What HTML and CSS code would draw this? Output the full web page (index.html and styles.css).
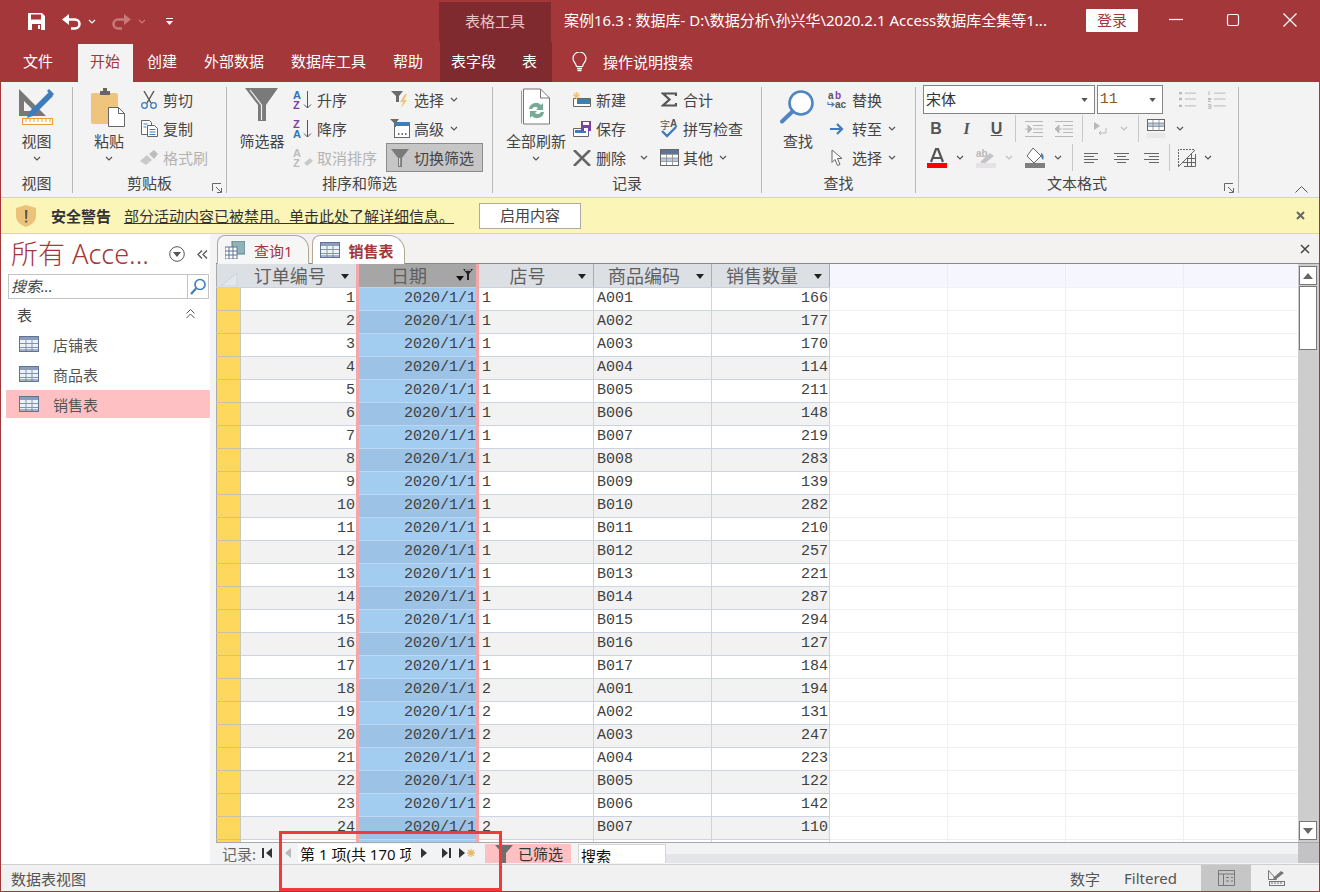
FILE: index.html
```html
<!DOCTYPE html>
<html lang="zh-CN">
<head>
    <meta charset="UTF-8">
    <title>Access 数据表视图</title>
    <link rel="stylesheet" href="styles.css">
</head>
<body>

    <!-- 重复使用的图标 -->
    <svg class="sprite" width="0" height="0">
        <symbol id="chev" viewBox="0 0 8 5"><path d="M1 1l3 3 3-3" fill="none" stroke="currentColor" stroke-width="1.2"/></symbol>
        <symbol id="tbl" viewBox="0 0 20 16">
            <rect x=".5" y=".5" width="19" height="15" fill="#eef1f6" stroke="#5f7397"/>
            <rect x="1" y="1" width="18" height="3" fill="#8c9dbc"/>
            <path d="M1 7.5h18M1 11.5h18M7 4v11M13 4v11" stroke="#8294b4" fill="none"/>
            <rect x="1" y="13" width="18" height="2" fill="#5f7397" opacity=".5"/>
        </symbol>
        <symbol id="drop" viewBox="0 0 8 5"><path d="M0 0h8L4 5z" fill="currentColor"/></symbol>
        <symbol id="funnel" viewBox="0 0 18 18"><path d="M0 0h18l-7 9v9H7V9z" fill="#7a7a7a"/><path d="M8.6 9v8" stroke="#d8d8d8" stroke-width="1.2"/></symbol>
    </svg>

    <div class="window">

        <!-- 标题栏 -->
        <div class="titlebar">
            <div class="qat">
                <svg class="q-save" width="17" height="17" viewBox="0 0 17 17"><path d="M0 0h14l3 3v14H0z" fill="#fff"/><path d="M3 1.500h10v5H3zM4 11h9v6H4z" fill="#a4373a"/><path d="M10 12h2v4h-2z" fill="#fff"/></svg>
                <svg class="q-undo" width="19" height="16" viewBox="0 0 19 16"><path d="M3 5.500h10a4.500 4.500 0 0 1 0 9H9" fill="none" stroke="#fff" stroke-width="2.600"/><path d="M7 0v11L0 5.500z" fill="#fff"/></svg>
                <svg class="q-chev" width="8" height="5"><use href="#chev"/></svg>
                <svg class="q-redo" width="19" height="16" viewBox="0 0 19 16"><path d="M16 5.500H6a4.500 4.500 0 0 0 0 9h4" fill="none" stroke="#c9787a" stroke-width="2.600"/><path d="M12 0v11l7-5.500z" fill="#c9787a"/></svg>
                <svg class="q-chev dim" width="8" height="5"><use href="#chev"/></svg>
                <svg class="q-more" width="7" height="7" viewBox="0 0 7 7"><path d="M0 0h7v1H0zM0 3h7L3.500 7z" fill="#fff"/></svg>
            </div>
            <div class="ctx-label">表格工具</div>
            <div class="doc-title">案例16.3 : 数据库- D:\数据分析\孙兴华\2020.2.1 Access数据库全集等1...</div>
            <div class="login">登录</div>
            <div class="win-btns">
                <div class="win-btn"><svg width="14" height="14" viewBox="0 0 14 14"><path d="M0 6.500h14" stroke="#fff" stroke-width="1.200"/></svg></div>
                <div class="win-btn"><svg width="14" height="14" viewBox="0 0 14 14"><rect x="1.500" y="1.500" width="11" height="11" rx="1.500" fill="none" stroke="#fff" stroke-width="1.200"/></svg></div>
                <div class="win-btn"><svg width="14" height="14" viewBox="0 0 14 14"><path d="M.5.500l13 13M13.500.500l-13 13" stroke="#fff" stroke-width="1.200"/></svg></div>
            </div>
        </div>

        <!-- 选项卡 -->
        <div class="tabbar">
            <div class="tab tab-file">文件</div>
            <div class="tab tab-on">开始</div>
            <div class="tab">创建</div>
            <div class="tab">外部数据</div>
            <div class="tab">数据库工具</div>
            <div class="tab">帮助</div>
            <div class="ctx-tabs">
                <div class="tab">表字段</div>
                <div class="tab">表</div>
            </div>
            <svg class="bulb" width="15" height="20" viewBox="0 0 15 20"><path d="M4.500 14.500C4 11 1 10 1 6.500a6.500 6.500 0 0 1 13 0c0 3.500-3 4.500-3.500 8z" fill="none" stroke="#fff" stroke-width="1.200"/><path d="M5 16.500h5M5.500 18.500h4" stroke="#fff" stroke-width="1.300"/></svg>
            <div class="tell">操作说明搜索</div>
        </div>

        <!-- 功能区 -->
        <div class="ribbon">

            <div class="group g-view">
                <div class="g-body">
                    <div class="big big-view">
                        <div class="big-ico"><svg width="36" height="38" viewBox="0 0 36 38">
                            <path d="M0 1v27h27zM5 13l10 10H5z" fill="#787878" fill-rule="evenodd"/>
                            <path d="M10 24L30 4l4 4-20 20-6 2z" fill="#3f7cbc"/><path d="M30 1l5 5-2 2-5-5z" fill="#3f7cbc"/>
                            <rect x="3.500" y="30.500" width="30" height="6" fill="#fff" stroke="#ed9b40"/>
                            <path d="M7 31v3M11 31v3M15 31v3M19 31v3M23 31v3M27 31v3M31 31v3" stroke="#ed9b40"/>
                        </svg></div>
                        <div class="big-txt">视图</div>
                        <svg class="chev" width="8" height="5"><use href="#chev"/></svg>
                    </div>
                </div>
                <div class="g-label">视图</div>
            </div>

            <div class="group g-clip">
                <div class="g-body">
                    <div class="big big-paste">
                        <div class="big-ico"><svg width="36" height="40" viewBox="0 0 36 40">
                            <rect x="0" y="5" width="27" height="31" rx="2" fill="#efc47d"/>
                            <path d="M9 7V3h3V0h4v3h3v4z" fill="#666"/>
                            <path d="M17.500 19.500h10l6 6v13h-16z" fill="#fff" stroke="#666"/><path d="M27.500 19.500v6h6" fill="none" stroke="#666"/>
                        </svg></div>
                        <div class="big-txt">粘贴</div>
                        <svg class="chev" width="8" height="5"><use href="#chev"/></svg>
                    </div>
                    <div class="col col-clip">
                        <div class="sm"><span class="sm-ico"><svg width="16" height="18" viewBox="0 0 16 18"><path d="M3 0l7 12M13 0L6 12" stroke="#555" stroke-width="1.400"/><circle cx="3.500" cy="14.500" r="2.800" fill="none" stroke="#3f7cbc" stroke-width="1.300"/><circle cx="12.500" cy="14.500" r="2.800" fill="none" stroke="#3f7cbc" stroke-width="1.300"/></svg></span>剪切</div>
                        <div class="sm"><span class="sm-ico"><svg width="17" height="17" viewBox="0 0 17 17"><path d="M.5.500h8l2 2v12H.5z" fill="#fff" stroke="#666"/><path d="M6.500 5.500h7l3 3v8h-10z" fill="#fff" stroke="#666"/><path d="M2.500 4h4M2.500 7h3M8.500 9.500h6M8.500 12h6M8.500 14.500h6" stroke="#3f7cbc"/></svg></span>复制</div>
                        <div class="sm off"><span class="sm-ico"><svg width="18" height="15" viewBox="0 0 18 15"><path d="M0 11l7-6 5 5-6 5z" fill="#c9c9c9"/><path d="M9 4l5-4 4 4-4 5z" fill="#bdbdbd"/></svg></span>格式刷</div>
                    </div>
                </div>
                <div class="g-label">剪贴板</div>
                <svg class="launcher" width="10" height="10" viewBox="0 0 10 10"><path d="M.5 8V.5H9M4 4l5 5M5 9.500h4.500V5" fill="none" stroke="#666"/></svg>
            </div>

            <div class="group g-sort">
                <div class="g-body">
                    <div class="big big-filter">
                        <div class="big-ico"><svg width="34" height="34" viewBox="0 0 34 34"><path d="M0 0h33L21 17v16h-8V17z" fill="#7a7a7a"/><path d="M5 2l11.500 15v15" fill="none" stroke="#f1f1f1" stroke-width="1.200"/></svg></div>
                        <div class="big-txt">筛选器</div>
                    </div>
                    <div class="col col-sort">
                        <div class="sm"><span class="sm-ico"><svg width="20" height="20" viewBox="0 0 20 20"><text class="ico-t" x="0" y="9" fill="#2e75b6">A</text><text class="ico-t" x="0" y="19" fill="#7b3fa8">Z</text><path d="M14.500 1v17M11 14.500l3.500 3.500 3.500-3.500" fill="none" stroke="#555"/></svg></span>升序</div>
                        <div class="sm"><span class="sm-ico"><svg width="20" height="20" viewBox="0 0 20 20"><text class="ico-t" x="0" y="9" fill="#7b3fa8">Z</text><text class="ico-t" x="0" y="19" fill="#2e75b6">A</text><path d="M14.500 1v17M11 14.500l3.500 3.500 3.500-3.500" fill="none" stroke="#555"/></svg></span>降序</div>
                        <div class="sm off"><span class="sm-ico"><svg width="20" height="20" viewBox="0 0 20 20"><text class="ico-t" x="0" y="9" fill="#bcbcbc">A</text><text class="ico-t" x="0" y="19" fill="#bcbcbc">Z</text><path d="M11 15l6-5 3 3-6 5z" fill="#c9c9c9"/></svg></span>取消排序</div>
                    </div>
                    <div class="col col-sel">
                        <div class="sm"><span class="sm-ico"><svg width="18" height="18" viewBox="0 0 18 18"><path d="M0 0h12L8 5v6H5V5z" fill="#6b6b6b"/><path d="M14 3l-5 8h3l-2 6 6-8h-3l3-6z" fill="#efc47d"/></svg></span>选择<svg class="chev-r" width="8" height="5"><use href="#chev"/></svg></div>
                        <div class="sm"><span class="sm-ico"><svg width="20" height="19" viewBox="0 0 20 19"><rect x="4.500" y="3.500" width="15" height="15" fill="#fff" stroke="#666"/><rect x="5" y="3" width="15" height="4" fill="#3f7cbc"/><path d="M0 0h9L6 4v4H4V4z" fill="#6b6b6b"/><path d="M8 15h1.500M11.500 15H13M15 15h1.500" stroke="#444" stroke-width="1.500"/></svg></span>高级<svg class="chev-r" width="8" height="5"><use href="#chev"/></svg></div>
                        <div class="sm toggle"><span class="sm-ico"><svg width="18" height="18"><use href="#funnel"/></svg></span>切换筛选</div>
                    </div>
                </div>
                <div class="g-label">排序和筛选</div>
            </div>

            <div class="group g-rec">
                <div class="g-body">
                    <div class="big big-refresh">
                        <div class="big-ico"><svg width="30" height="37" viewBox="0 0 30 37">
                            <path d="M.5 2.500v33" stroke="#999"/>
                            <path d="M2.500 1h17l9 9v26h-26z" fill="#fff" stroke="#777"/><path d="M19.500 1v9h9" fill="none" stroke="#777"/>
                            <path d="M8 21a7 7 0 0 1 12-4l2-2v7h-7l2-2a4 4 0 0 0-6 1z" fill="#78ab97"/>
                            <path d="M23 24a7 7 0 0 1-12 4l-2 2v-7h7l-2 2a4 4 0 0 0 6-1z" fill="#78ab97"/>
                        </svg></div>
                        <div class="big-txt">全部刷新</div>
                        <svg class="chev" width="8" height="5"><use href="#chev"/></svg>
                    </div>
                    <div class="col col-rec">
                        <div class="sm"><span class="sm-ico"><svg width="18" height="15" viewBox="0 0 18 15"><path d="M.5 6.500h17v8H.5z" fill="#fff" stroke="#666"/><rect x="4" y="7" width="13" height="5" fill="#3f7cbc"/><path d="M3.500 0v7M0 3.500h7M1 1l5 5M6 1L1 6" stroke="#efc47d" stroke-width="1.100"/></svg></span>新建</div>
                        <div class="sm"><span class="sm-ico"><svg width="18" height="16" viewBox="0 0 18 16"><path d="M.5 7.500h15v8H.5z" fill="#fff" stroke="#666"/><rect x="2" y="9" width="11" height="3" fill="#3f7cbc"/><rect x="8" y="0" width="10" height="10" fill="#7b3fa8"/><rect x="10" y="1" width="6" height="3" fill="#fff"/><rect x="11" y="7" width="4" height="3" fill="#fff"/></svg></span>保存</div>
                        <div class="sm"><span class="sm-ico"><svg width="18" height="16" viewBox="0 0 18 16"><path d="M1 0l16 16M17 0L1 16" stroke="#666" stroke-width="2.600"/></svg></span>删除<svg class="chev-r chev-del" width="8" height="5"><use href="#chev"/></svg></div>
                    </div>
                    <div class="col">
                        <div class="sm"><span class="sm-ico"><svg width="16" height="15" viewBox="0 0 16 15"><path d="M15 4V1.500H2L8.500 7.500 2 13.500h13V11" fill="none" stroke="#555" stroke-width="2.200"/></svg></span>合计</div>
                        <div class="sm"><span class="sm-ico"><svg width="18" height="20" viewBox="0 0 18 20"><text class="ico-cn" x="0" y="10" fill="#555">字</text><text class="ico-t2" x="10" y="8" fill="#555">A</text><path d="M2 12l5 5 9-9" fill="none" stroke="#3f7cbc" stroke-width="2.400"/></svg></span>拼写检查</div>
                        <div class="sm"><span class="sm-ico"><svg width="19" height="17" viewBox="0 0 19 17"><rect x=".5" y=".5" width="18" height="16" fill="#fff" stroke="#666"/><rect x="1" y="1" width="17" height="4" fill="#5f7397"/><rect x="1" y="9" width="17" height="3" fill="#b5cbe3"/><path d="M1 5.500h17M1 9h17M1 12.500h17M6.500 5v11M12.500 5v11" stroke="#8a8a8a" stroke-width=".8"/></svg></span>其他<svg class="chev-r" width="8" height="5"><use href="#chev"/></svg></div>
                    </div>
                </div>
                <div class="g-label">记录</div>
            </div>

            <div class="group g-find">
                <div class="g-body">
                    <div class="big big-find">
                        <div class="big-ico"><svg width="36" height="36" viewBox="0 0 36 36"><circle cx="21" cy="15" r="11.500" fill="#fff" stroke="#4f86bf" stroke-width="2.600"/><path d="M12.500 23.500L2 33.500" stroke="#4f86bf" stroke-width="4" stroke-linecap="round"/></svg></div>
                        <div class="big-txt">查找</div>
                    </div>
                    <div class="col col-find">
                        <div class="sm"><span class="sm-ico"><svg width="21" height="18" viewBox="0 0 21 18"><text class="ico-t2" x="1" y="8" fill="#555">a</text><text class="ico-t2" x="8" y="8" fill="#7b3fa8">b</text><text class="ico-t2" x="8" y="17" fill="#555">ac</text><path d="M1 11v2.500h6M4.500 11.500l2.500 2-2.500 2" fill="none" stroke="#3f7cbc" stroke-width="1.100"/></svg></span>替换</div>
                        <div class="sm"><span class="sm-ico"><svg width="14" height="12" viewBox="0 0 14 12"><path d="M0 6h11M7 1l5 5-5 5" fill="none" stroke="#3f7cbc" stroke-width="2.200"/></svg></span>转至<svg class="chev-r" width="8" height="5"><use href="#chev"/></svg></div>
                        <div class="sm"><span class="sm-ico"><svg width="12" height="18" viewBox="0 0 12 18"><path d="M1 1v12.500l3-3 2.500 6 2.500-1-2.500-6H11z" fill="#fff" stroke="#666"/></svg></span>选择<svg class="chev-r" width="8" height="5"><use href="#chev"/></svg></div>
                    </div>
                </div>
                <div class="g-label">查找</div>
            </div>

            <div class="group g-text">
                <div class="fmt">
                    <div class="fmt-row1">
                        <div class="combo combo-font">宋体<svg class="combo-arrow" width="7" height="4"><use href="#drop"/></svg></div>
                        <div class="combo combo-size">11<svg class="combo-arrow" width="7" height="4"><use href="#drop"/></svg></div>
                        <svg class="list-ico" width="18" height="18" viewBox="0 0 18 18"><path d="M0 2h3M0 8h3M0 15h3" stroke="#b8b8b8" stroke-width="2.500"/><path d="M6 2h12M6 8h12M6 15h12" stroke="#b8b8b8"/></svg>
                        <svg class="list-ico" width="18" height="18" viewBox="0 0 18 18"><path d="M1 0v4M0 7.500h3v1H0v2h3M0 13.500h3v4H0M0 15.500h3" stroke="#b8b8b8" fill="none"/><path d="M6 2h12M6 8h12M6 15h12" stroke="#b8b8b8"/></svg>
                    </div>
                    <div class="fmt-row fmt-row2">
                        <div class="cell b-cell">B</div>
                        <div class="cell i-cell">I</div>
                        <div class="cell u-cell">U</div>
                        <div class="cell"><span class="vsep"></span></div>
                        <div class="cell"><svg width="18" height="16" viewBox="0 0 18 16"><path d="M0 .5h18M8 4.500h10M8 8h10M8 11.500h10M0 15.500h18" stroke="#b8b8b8"/><path d="M0 8h4M3 4l4 4-4 4z" fill="#b8b8b8" stroke="#b8b8b8"/></svg></div>
                        <div class="cell"><svg width="18" height="16" viewBox="0 0 18 16"><path d="M0 .5h18M8 4.500h10M8 8h10M8 11.500h10M0 15.500h18" stroke="#b8b8b8"/><path d="M3 8h4M4 4L0 8l4 4z" fill="#b8b8b8" stroke="#b8b8b8"/></svg></div>
                        <div class="cell"><span class="vsep"></span></div>
                        <div class="cell"><svg width="14" height="14" viewBox="0 0 14 14"><path d="M0 0l6 4-6 4z" fill="#b8b8b8"/><path d="M12 6v5H5M7 9l-2 2 2 2" fill="none" stroke="#b8b8b8"/></svg></div>
                        <div class="cell"><svg class="off-c" width="8" height="5"><use href="#chev"/></svg></div>
                        <div class="cell"><span class="vsep"></span></div>
                        <div class="cell"><svg width="20" height="19" viewBox="0 0 20 19"><rect x=".5" y=".5" width="17" height="11" fill="#fff" stroke="#666"/><rect x="1" y="4" width="16" height="3" fill="#b5cbe3"/><path d="M6 1v11M12 1v11M1 4h16M1 7.500h16" stroke="#888" stroke-width=".8"/><rect y="14" width="18" height="5" fill="#e8e8e8"/></svg></div>
                        <div class="cell"><svg class="on-c" width="8" height="5"><use href="#chev"/></svg></div>
                    </div>
                    <div class="fmt-row fmt-row3">
                        <div class="cell"><svg width="20" height="20" viewBox="0 0 20 20"><path d="M4 14l5-13h2l5 13M6 10h8" fill="none" stroke="#555" stroke-width="2.200"/><rect y="15" width="20" height="5" fill="#f00"/></svg></div>
                        <div class="cell"><svg class="on-c" width="8" height="5"><use href="#chev"/></svg></div>
                        <div class="cell"><svg width="20" height="20" viewBox="0 0 20 20"><text class="ico-t2" x="0" y="9" fill="#b8b8b8">ab</text><path d="M4 14l10-9 4 3-10 8z" fill="#c4c4c4"/><rect y="15" width="20" height="5" fill="#e6e1e6"/></svg></div>
                        <div class="cell"><svg class="off-c" width="8" height="5"><use href="#chev"/></svg></div>
                        <div class="cell"><svg width="20" height="20" viewBox="0 0 20 20"><path d="M8 0l8 8-7 7-7-7z" fill="#fff" stroke="#666"/><path d="M16 5c3 1 3 5 2 7-2-2-2-4-2-7z" fill="#3f7cbc"/><rect y="15" width="20" height="5" fill="#7f7f7f"/></svg></div>
                        <div class="cell"><svg class="on-c" width="8" height="5"><use href="#chev"/></svg></div>
                        <div class="cell"><span class="vsep"></span></div>
                        <div class="cell"><svg width="15" height="10" viewBox="0 0 15 10"><path d="M0 .5h14M0 3.500h10M0 6.500h14M0 9.500h10" stroke="#666"/></svg></div>
                        <div class="cell"><svg width="15" height="10" viewBox="0 0 15 10"><path d="M0 .5h15M3 3.500h9M0 6.500h15M3 9.500h9" stroke="#666"/></svg></div>
                        <div class="cell"><svg width="15" height="10" viewBox="0 0 15 10"><path d="M0 .5h15M5 3.500h10M0 6.500h15M5 9.500h10" stroke="#666"/></svg></div>
                        <div class="cell"><span class="vsep"></span></div>
                        <div class="cell"><svg width="18" height="18" viewBox="0 0 18 18"><path d="M.5 17V.5H17" fill="none" stroke="#666" stroke-dasharray="2 1"/><path d="M0 18L17 1" stroke="#666"/><path d="M17.500 5v12.500H6M5 13.500h12M9.500 9v8M13.500 5v12M9 9.500h8" fill="none" stroke="#666"/></svg></div>
                        <div class="cell"><svg class="on-c" width="8" height="5"><use href="#chev"/></svg></div>
                    </div>
                </div>
                <div class="g-label">文本格式</div>
                <svg class="launcher" width="10" height="10" viewBox="0 0 10 10"><path d="M.5 8V.5H9M4 4l5 5M5 9.500h4.500V5" fill="none" stroke="#666"/></svg>
            </div>

            <svg class="collapse" width="13" height="7" viewBox="0 0 13 7"><path d="M.5 6.500l6-6 6 6" fill="none" stroke="#555"/></svg>
        </div>

        <!-- 安全警告 -->
        <div class="msgbar">
            <svg class="shield" width="20" height="22" viewBox="0 0 20 22"><path d="M10 0l10 3v8c0 6-5 9-10 11C5 20 0 17 0 11V3z" fill="#ecc27a"/><path d="M9 5h2.400l-.4 9H9.400zM9.200 15.500h2v2h-2z" fill="#555"/></svg>
            <b class="msg-title">安全警告</b>
            <u class="msg-link">部分活动内容已被禁用。单击此处了解详细信息。</u>
            <div class="msg-btn">启用内容</div>
            <svg class="msg-x" width="9" height="9" viewBox="0 0 9 9"><path d="M1 1l7 7M8 1L1 8" stroke="#666" stroke-width="2"/></svg>
        </div>

        <div class="main">

            <!-- 导航窗格 -->
            <div class="nav">
                <div class="nav-head">
                    <div class="nav-title">所有 Acce...</div>
                    <svg class="nav-drop" width="16" height="16" viewBox="0 0 16 16"><circle cx="8" cy="8" r="7.300" fill="none" stroke="#555"/><path d="M4 6h8l-4 5z" fill="#555"/></svg>
                    <svg class="nav-shut" width="11" height="9" viewBox="0 0 11 9"><path d="M5 .5L1 4.500l4 4M10 .5L6 4.500l4 4" fill="none" stroke="#555" stroke-width="1.300"/></svg>
                </div>
                <div class="nav-search">
                    <div class="nav-input">搜索...</div>
                    <div class="nav-go"><svg width="16" height="17" viewBox="0 0 16 17"><circle cx="10" cy="6.500" r="5" fill="none" stroke="#3f7cbc" stroke-width="1.600"/><path d="M6 10.500L1 16" stroke="#3f7cbc" stroke-width="2.200"/></svg></div>
                </div>
                <div class="nav-sec">表<svg width="9" height="10" viewBox="0 0 9 10"><path d="M.5 4.500l4-4 4 4M.5 9l4-4 4 4" fill="none" stroke="#555"/></svg></div>
                <div class="nav-item"><svg width="20" height="16"><use href="#tbl"/></svg>店铺表</div>
                <div class="nav-item"><svg width="20" height="16"><use href="#tbl"/></svg>商品表</div>
                <div class="nav-item nav-on"><svg width="20" height="16"><use href="#tbl"/></svg>销售表</div>
            </div>

            <div class="doc">
                <div class="doc-tabs">
                    <div class="dtab"><svg width="20" height="18" viewBox="0 0 20 18"><rect x="7" y="0" width="13" height="13" fill="#8fb3b8" stroke="#5b7f88"/><rect x="0" y="6" width="12" height="12" fill="#fff" stroke="#5f7397"/><path d="M0 10h12M0 14h12M4 6v12M8 6v12" stroke="#5f7397"/></svg>查询1</div>
                    <div class="dtab dtab-on"><svg width="20" height="16"><use href="#tbl"/></svg>销售表</div>
                    <svg class="doc-x" width="10" height="10" viewBox="0 0 10 10"><path d="M1 1l8 8M9 1L1 9" stroke="#444" stroke-width="1.500"/></svg>
                </div>

                <div class="sheet">
                    <div class="grid-wrap">
                        <table class="grid">
                            <colgroup>
                                <col class="c-sel"><col class="c-a"><col class="c-b"><col class="c-c"><col class="c-d"><col class="c-d"><col class="c-d"><col class="c-d"><col class="c-d"><col class="c-e">
                            </colgroup>
                            <thead>
                                <tr>
                                    <th class="corner"><svg width="18" height="14" viewBox="0 0 18 14"><path d="M0 14L16 1v13z" fill="#e3e6eb" stroke="#ccd2da"/></svg></th>
                                    <th><span class="h-txt">订单编号</span><svg class="h-drop" width="8" height="5"><use href="#drop"/></svg></th>
                                    <th class="h-date"><span class="h-txt">日期</span><svg class="h-filt" width="18" height="13" viewBox="0 0 18 13"><path d="M0 8h8l-4 5z" fill="#111"/><path d="M7 1h10l-4 5v6h-2V6z" fill="#222"/><path d="M9 2h6" stroke="#fff"/></svg></th>
                                    <th><span class="h-txt">店号</span><svg class="h-drop" width="8" height="5"><use href="#drop"/></svg></th>
                                    <th><span class="h-txt">商品编码</span><svg class="h-drop" width="8" height="5"><use href="#drop"/></svg></th>
                                    <th><span class="h-txt">销售数量</span><svg class="h-drop" width="8" height="5"><use href="#drop"/></svg></th>
                                    <th class="h-new"></th><th class="h-new"></th><th class="h-new"></th><th class="h-new"></th>
                                </tr>
                            </thead>
                            <tbody>
                                <tr><td class="s"></td><td class="n">1</td><td class="d">2020/1/1</td><td>1</td><td>A001</td><td class="n">166</td><td class="e"></td><td class="e"></td><td class="e"></td><td class="e"></td></tr>
                                <tr><td class="s"></td><td class="n">2</td><td class="d">2020/1/1</td><td>1</td><td>A002</td><td class="n">177</td><td class="e"></td><td class="e"></td><td class="e"></td><td class="e"></td></tr>
                                <tr><td class="s"></td><td class="n">3</td><td class="d">2020/1/1</td><td>1</td><td>A003</td><td class="n">170</td><td class="e"></td><td class="e"></td><td class="e"></td><td class="e"></td></tr>
                                <tr><td class="s"></td><td class="n">4</td><td class="d">2020/1/1</td><td>1</td><td>A004</td><td class="n">114</td><td class="e"></td><td class="e"></td><td class="e"></td><td class="e"></td></tr>
                                <tr><td class="s"></td><td class="n">5</td><td class="d">2020/1/1</td><td>1</td><td>B005</td><td class="n">211</td><td class="e"></td><td class="e"></td><td class="e"></td><td class="e"></td></tr>
                                <tr><td class="s"></td><td class="n">6</td><td class="d">2020/1/1</td><td>1</td><td>B006</td><td class="n">148</td><td class="e"></td><td class="e"></td><td class="e"></td><td class="e"></td></tr>
                                <tr><td class="s"></td><td class="n">7</td><td class="d">2020/1/1</td><td>1</td><td>B007</td><td class="n">219</td><td class="e"></td><td class="e"></td><td class="e"></td><td class="e"></td></tr>
                                <tr><td class="s"></td><td class="n">8</td><td class="d">2020/1/1</td><td>1</td><td>B008</td><td class="n">283</td><td class="e"></td><td class="e"></td><td class="e"></td><td class="e"></td></tr>
                                <tr><td class="s"></td><td class="n">9</td><td class="d">2020/1/1</td><td>1</td><td>B009</td><td class="n">139</td><td class="e"></td><td class="e"></td><td class="e"></td><td class="e"></td></tr>
                                <tr><td class="s"></td><td class="n">10</td><td class="d">2020/1/1</td><td>1</td><td>B010</td><td class="n">282</td><td class="e"></td><td class="e"></td><td class="e"></td><td class="e"></td></tr>
                                <tr><td class="s"></td><td class="n">11</td><td class="d">2020/1/1</td><td>1</td><td>B011</td><td class="n">210</td><td class="e"></td><td class="e"></td><td class="e"></td><td class="e"></td></tr>
                                <tr><td class="s"></td><td class="n">12</td><td class="d">2020/1/1</td><td>1</td><td>B012</td><td class="n">257</td><td class="e"></td><td class="e"></td><td class="e"></td><td class="e"></td></tr>
                                <tr><td class="s"></td><td class="n">13</td><td class="d">2020/1/1</td><td>1</td><td>B013</td><td class="n">221</td><td class="e"></td><td class="e"></td><td class="e"></td><td class="e"></td></tr>
                                <tr><td class="s"></td><td class="n">14</td><td class="d">2020/1/1</td><td>1</td><td>B014</td><td class="n">287</td><td class="e"></td><td class="e"></td><td class="e"></td><td class="e"></td></tr>
                                <tr><td class="s"></td><td class="n">15</td><td class="d">2020/1/1</td><td>1</td><td>B015</td><td class="n">294</td><td class="e"></td><td class="e"></td><td class="e"></td><td class="e"></td></tr>
                                <tr><td class="s"></td><td class="n">16</td><td class="d">2020/1/1</td><td>1</td><td>B016</td><td class="n">127</td><td class="e"></td><td class="e"></td><td class="e"></td><td class="e"></td></tr>
                                <tr><td class="s"></td><td class="n">17</td><td class="d">2020/1/1</td><td>1</td><td>B017</td><td class="n">184</td><td class="e"></td><td class="e"></td><td class="e"></td><td class="e"></td></tr>
                                <tr><td class="s"></td><td class="n">18</td><td class="d">2020/1/1</td><td>2</td><td>A001</td><td class="n">194</td><td class="e"></td><td class="e"></td><td class="e"></td><td class="e"></td></tr>
                                <tr><td class="s"></td><td class="n">19</td><td class="d">2020/1/1</td><td>2</td><td>A002</td><td class="n">131</td><td class="e"></td><td class="e"></td><td class="e"></td><td class="e"></td></tr>
                                <tr><td class="s"></td><td class="n">20</td><td class="d">2020/1/1</td><td>2</td><td>A003</td><td class="n">247</td><td class="e"></td><td class="e"></td><td class="e"></td><td class="e"></td></tr>
                                <tr><td class="s"></td><td class="n">21</td><td class="d">2020/1/1</td><td>2</td><td>A004</td><td class="n">223</td><td class="e"></td><td class="e"></td><td class="e"></td><td class="e"></td></tr>
                                <tr><td class="s"></td><td class="n">22</td><td class="d">2020/1/1</td><td>2</td><td>B005</td><td class="n">122</td><td class="e"></td><td class="e"></td><td class="e"></td><td class="e"></td></tr>
                                <tr><td class="s"></td><td class="n">23</td><td class="d">2020/1/1</td><td>2</td><td>B006</td><td class="n">142</td><td class="e"></td><td class="e"></td><td class="e"></td><td class="e"></td></tr>
                                <tr><td class="s"></td><td class="n">24</td><td class="d">2020/1/1</td><td>2</td><td>B007</td><td class="n">110</td><td class="e"></td><td class="e"></td><td class="e"></td><td class="e"></td></tr>
                                <tr><td class="s"></td><td class="n"></td><td class="d"></td><td></td><td></td><td class="n"></td><td class="e"></td><td class="e"></td><td class="e"></td><td class="e"></td></tr>
                            </tbody>
                        </table>
                    </div>
                    <div class="vscroll">
                        <div class="vs-btn"><svg width="10" height="6"><path d="M0 6h10L5 0z" fill="#666"/></svg></div>
                        <div class="vs-thumb"></div>
                        <div class="vs-btn vs-down"><svg width="10" height="6"><path d="M0 0h10L5 6z" fill="#666"/></svg></div>
                    </div>
                </div>

                <!-- 记录导航 -->
                <div class="recbar">
                    <span class="rec-label">记录:</span>
                    <svg class="rec-first" width="10" height="10" viewBox="0 0 10 10"><path d="M0 0h2v10H0zM10 0v10L4 5z" fill="#333"/></svg>
                    <svg class="rec-prev" width="6" height="10" viewBox="0 0 6 10"><path d="M6 0v10L0 5z" fill="#b8b8b8"/></svg>
                    <div class="rec-input">第 1 项(共 170 项)</div>
                    <svg class="rec-next" width="6" height="10" viewBox="0 0 6 10"><path d="M0 0v10l6-5z" fill="#333"/></svg>
                    <svg class="rec-last" width="9" height="10" viewBox="0 0 9 10"><path d="M0 0v10l6-5zM7 0h2v10H7z" fill="#333"/></svg>
                    <svg class="rec-new" width="17" height="10" viewBox="0 0 17 10"><path d="M0 0v10l6-5z" fill="#333"/><path d="M12 1v8M8 5h8M9 2l6 6M15 2l-6 6" stroke="#e8b96a" stroke-width="1.300"/></svg>
                    <div class="rec-filter"><svg width="18" height="18" viewBox="0 0 18 18"><path d="M0 0h18l-7 8v10H7V8z" fill="#6e6e6e"/></svg>已筛选</div>
                    <div class="rec-search">搜索</div>
                    <div class="hscroll"></div>
                    <div class="rec-corner"></div>
                </div>
            </div>
        </div>

        <!-- 状态栏 -->
        <div class="statusbar">
            <span class="st-left">数据表视图</span>
            <span class="st-num">数字</span>
            <span class="st-filt">Filtered</span>
            <div class="st-btn st-on"><svg width="17" height="16" viewBox="0 0 17 16"><path d="M.5.500h16v15H.5zM.5 4h16M5.500 4v11.500" fill="none" stroke="#777"/><path d="M8 7.500h3M13 7.500h2M8 11h3M13 11h2" stroke="#777"/></svg></div>
            <div class="st-btn"><svg width="17" height="16" viewBox="0 0 17 16"><path d="M.5.500v9h8z" fill="none" stroke="#777"/><path d="M5 8l8-7 3 2-9 7z" fill="#777"/><rect x="1.500" y="11.500" width="15" height="4" fill="none" stroke="#777"/><path d="M4 12v2M7 12v2M10 12v2M13 12v2" stroke="#777"/></svg></div>
        </div>

        <!-- 截图上的红框标注 -->
        <div class="callout"></div>
    </div>

</body>
</html>
```

FILE: styles.css
```css
/* 页面基础 */
* {
    box-sizing: border-box;
}

body {
    margin: 0;
    overflow: hidden;
    font-family: "Noto Sans", "Noto Sans CJK SC", sans-serif;
    font-size: 15px;
    color: #444;
}

.sprite {
    position: absolute;
}

.window {
    position: relative;
    width: 1320px;
    height: 892px;
    border: 1px solid #a4373a;
    border-top: 0;
    background: #f3f3f3;
    display: flex;
    flex-direction: column;
}

/* 标题栏 */
.titlebar {
    height: 42px;
    margin: 0 -1px;
    background: #a4373a;
    color: #fff;
    display: flex;
}

.qat {
    width: 439px;
    display: flex;
    align-items: center;
    padding-top: 1px;
    color: #fff;
}

.q-save {
    margin-left: 28px;
}

.q-undo {
    margin-left: 17px;
}

.q-chev {
    margin-left: 7px;
    color: #fff;
}

.q-chev.dim {
    color: #c9787a;
}

.q-redo {
    margin-left: 16px;
}

.q-more {
    margin-left: 20px;
}

.ctx-label {
    width: 112px;
    margin-top: 2px;
    background: #7f2a2e;
    color: #e9c3c4;
    font-size: 15px;
    line-height: 38px;
    text-align: center;
}

.doc-title {
    width: 500px;
    margin-left: 13px;
    line-height: 41px;
    white-space: nowrap;
    overflow: hidden;
}

.login {
    width: 52px;
    height: 23px;
    margin: 9px 0 0 22px;
    background: #fff;
    color: #a4373a;
    line-height: 23px;
    text-align: center;
    border-radius: 1px;
}

.win-btns {
    display: flex;
    margin-left: 9px;
}

.win-btn {
    width: 57px;
    height: 40px;
    display: flex;
    align-items: center;
    justify-content: center;
}

/* 选项卡 */
.tabbar {
    height: 40px;
    margin: 0 -1px;
    background: #a4373a;
    color: #fff;
    display: flex;
    align-items: stretch;
    padding-left: 9.500px;
}

.tab {
    padding: 0 13.500px;
    line-height: 38px;
    white-space: nowrap;
}

.tab-file {
    margin-right: 11px;
}

.tab-on {
    margin: 2px 1px 0 0;
    padding: 0 12.500px;
    background: #f3f3f3;
    color: #a4373a;
    line-height: 34px;
}

.ctx-tabs {
    width: 112px;
    margin-left: 3.500px;
    background: #7f2a2e;
    display: flex;
}

.ctx-tabs .tab {
    padding: 0 15px 0 11px;
}

.bulb {
    margin: 10px 0 0 20px;
}

.tell {
    margin-left: 16px;
    line-height: 40px;
}

/* 功能区 */
.ribbon {
    position: relative;
    height: 116px;
    border-bottom: 1px solid #d2d2d2;
    display: flex;
    align-items: flex-start;
    padding-top: 5px;
}

.group {
    position: relative;
    height: 106px;
    border-right: 1px solid #b8b8b8;
    display: flex;
    flex-direction: column;
}

.g-view { width: 72px; }
.g-clip { width: 154px; }
.g-sort { width: 266px; }
.g-rec { width: 269px; }
.g-find { width: 154px; }
.g-text { width: 323px; }

.g-body {
    height: 91px;
    margin-top: -2px;
    display: flex;
}

.g-label {
    line-height: 20px;
    text-align: center;
    white-space: nowrap;
}

.g-view .g-label {
    padding-right: 0;
}

.launcher {
    position: absolute;
    right: 4px;
    bottom: 0;
}

.big {
    display: flex;
    flex-direction: column;
    align-items: center;
    flex-shrink: 0;
}

.big-ico {
    height: 46px;
    padding-top: 3px;
    display: flex;
    justify-content: center;
}

.big-txt {
    line-height: 20px;
    white-space: nowrap;
}

.chev {
    margin-top: 5px;
    color: #555;
}

.big-view { width: 71px; }
.big-paste { width: 52px; margin-left: 10px; }
.big-filter { width: 52px; margin-left: 9px; }
.big-refresh { width: 62px; margin-left: 12px; }
.big-find { width: 46px; margin-left: 13px; }

.col {
    display: flex;
    flex-direction: column;
}

.sm {
    height: 29px;
    display: flex;
    align-items: center;
    white-space: nowrap;
}

.sm-ico {
    width: 18px;
    margin-right: 5px;
    display: flex;
    justify-content: center;
    overflow: visible;
}

.sm-ico svg {
    flex-shrink: 0;
}

.off {
    color: #b3b3b3;
}

.chev-r {
    margin-left: 6px;
    color: #555;
}

.chev-del {
    margin-left: 14px;
}

.col-clip { margin-left: 5px; }
.col-sort { margin-left: 6px; width: 92px; }
.col-sel .sm { padding-left: 5px; }
.col-rec { margin-left: 6px; width: 87px; }
.col-find { margin-left: 7px; }

.col-find .sm-ico {
    margin-right: 6px;
}

.toggle {
    width: 97px;
    background: #c6c6c6;
    border: 1px solid #8c8c8c;
    padding-left: 4px !important;
}

.ico-t {
    font: bold 11px "Liberation Sans", sans-serif;
}

.ico-t2 {
    font: bold 10px "Liberation Sans", sans-serif;
}

.ico-cn {
    font: 10px "Noto Sans CJK SC", sans-serif;
}

/* 文本格式组 */
.fmt {
    height: 91px;
    margin-top: -2px;
    padding-left: 7px;
}

.fmt-row1 {
    display: flex;
    align-items: center;
    height: 29px;
}

.combo {
    position: relative;
    height: 29px;
    background: #fff;
    border: 1px solid #858585;
    color: #333;
    line-height: 27px;
    padding-left: 2px;
}

.combo-font {
    width: 175px;
}

.combo-size {
    width: 67px;
    margin: 0 16px 0 2px;
    font-family: "Liberation Mono", monospace;
    color: #8a5a1e;
}

.combo-arrow {
    position: absolute;
    right: 6px;
    top: 12px;
    color: #555;
}

.list-ico {
    margin-right: 12px;
}

.fmt-row {
    display: grid;
    height: 29px;
}

.fmt-row2 {
    margin-left: -2px;
    grid-template-columns: 30px 31px 29px 8px 30px 30px 6px 32px 14px 14px 24px 22px;
}

.fmt-row3 {
    margin-left: 1px;
    grid-template-columns: 26px 20px 32px 14px 38px 8px 20px 18px 42px 18px 18px 18px 24px;
}

.cell {
    display: flex;
    align-items: center;
    justify-content: center;
    height: 29px;
}

.b-cell, .i-cell, .u-cell {
    font: bold 16px "Liberation Sans", sans-serif;
    color: #555;
}

.i-cell {
    font-style: italic;
    font-family: "Liberation Serif", serif;
}

.u-cell {
    text-decoration: underline;
}

.vsep {
    width: 1px;
    height: 27px;
    background: #c8c8c8;
}

.on-c {
    color: #555;
}

.off-c {
    color: #bdbdbd;
}

.collapse {
    position: absolute;
    right: 11px;
    bottom: 4px;
}

/* 安全警告 */
.msgbar {
    height: 36px;
    background: #fcf5b8;
    border-bottom: 1px solid #e0d98a;
    display: flex;
    align-items: center;
    padding-left: 15px;
    color: #333;
}

.msg-title {
    margin-left: 15px;
}

.msg-link {
    margin-left: 13px;
    width: 330px;
    white-space: nowrap;
}

.msg-btn {
    width: 102px;
    height: 26px;
    margin-left: 25px;
    background: #fff;
    border: 1px solid #aaa;
    line-height: 23px;
    text-align: center;
    color: #444;
}

.msg-x {
    margin-left: 715px;
}

/* 主体 */
.main {
    flex: 1;
    display: flex;
    min-height: 0;
}

/* 导航窗格 */
.nav {
    width: 209px;
    background: #fff;
    flex-shrink: 0;
}

.nav-head {
    height: 40px;
    display: flex;
    align-items: center;
}

.nav-title {
    width: 160px;
    margin-left: 10px;
    font-size: 27px;
    font-weight: 300;
    color: #a4373a;
    white-space: nowrap;
    line-height: 38px;
}

.nav-drop {
    margin-left: -2px;
}

.nav-shut {
    margin-left: 12px;
}

.nav-search {
    width: 201px;
    height: 25px;
    margin-left: 7px;
    border: 1px solid #c3c3c3;
    display: flex;
}

.nav-input {
    flex: 1;
    padding-left: 2px;
    font-style: italic;
    line-height: 23px;
    color: #444;
}

.nav-go {
    width: 21px;
    border-left: 1px solid #c3c3c3;
    display: flex;
    align-items: center;
    justify-content: center;
}

.nav-sec {
    height: 30px;
    margin-top: 0;
    padding: 0 15px 0 16px;
    display: flex;
    align-items: center;
    justify-content: space-between;
}

.nav-item {
    height: 30px;
    margin-left: 5px;
    padding-left: 13px;
    display: flex;
    align-items: center;
    gap: 14px;
    color: #555;
}

.nav-on {
    height: 28px;
    margin-top: 1px;
    background: #ffc0c4;
}

/* 文档区 */
.doc {
    flex: 1;
    margin-left: 6px;
    min-width: 0;
    display: flex;
    flex-direction: column;
}

.doc-tabs {
    height: 30px;
    background: #f3f2f1;
    border-bottom: 1px solid #8a8a8a;
    display: flex;
    align-items: flex-end;
    padding-left: 1px;
    gap: 3px;
    position: relative;
}

.dtab {
    height: 29px;
    margin-bottom: -1px;
    padding: 0 15px 0 7px;
    background: #f6f6f6;
    border: 1px solid #b0aa98;
    border-bottom: 0;
    border-radius: 8px 14px 0 0;
    color: #a4373a;
    display: flex;
    align-items: center;
    gap: 9px;
}

.dtab-on {
    padding-right: 10px;
    background: #fff;
    font-weight: bold;
    border-radius: 8px 16px 0 0;
}

.doc-x {
    position: absolute;
    right: 9px;
    top: 10px;
}

.sheet {
    height: 578px;
    display: flex;
}

.grid-wrap {
    flex: 1;
    overflow: hidden;
    background: #fff;
    border-left: 0;
}

/* 数据表 */
.grid {
    table-layout: fixed;
    border-collapse: collapse;
    width: 1082px;
    font-family: "Liberation Mono", "Noto Sans CJK SC", monospace;
    font-size: 15px;
    color: #3f3f3f;
}

.c-sel { width: 24px; }
.c-a { width: 117px; }
.c-b { width: 120px; }
.c-c { width: 116px; }
.c-d { width: 118px; }
.c-e { width: 115px; }

.grid th {
    position: relative;
    height: 23px;
    padding: 0;
    background: #dcdfe4;
    border-right: 1px solid #a8aeb8;
    border-bottom: 1px solid #ccd2dc;
    font-weight: normal;
    font-size: 18px;
    color: #5f5f5f;
    font-family: "Noto Sans CJK SC", sans-serif;
    overflow: hidden;
    line-height: 22px;
}

.h-txt {
    display: block;
    padding-right: 17px;
    text-align: center;
}

.grid .corner {
    border-right: 0;
    border-left: 1px solid #aaa;
    text-align: left;
}

.corner svg {
    display: block;
    margin: 7px 0 0 4px;
}

.h-drop {
    position: absolute;
    right: 7px;
    top: 10px;
    color: #222;
}

.grid .h-date {
    background: #a6a6a6;
    border-left: 3px solid #f4a7ab;
    border-right: 3px solid #f4a7ab;
}

.h-filt {
    position: absolute;
    right: 2px;
    top: 4px;
}

.grid .h-new {
    background: #f6f7fe;
    border-right: 1px solid #eceef2;
    border-bottom: 1px solid #f0f1f6;
}

.grid td {
    height: 23px;
    padding: 0 3px;
    border-right: 1px solid #ccd3e2;
    border-bottom: 1px solid #ccd3e2;
    line-height: 22px;
    overflow: hidden;
    white-space: nowrap;
}

.grid tbody tr:nth-child(even) td {
    background: #f2f2f2;
}

.grid .s,
.grid tbody tr:nth-child(even) .s {
    padding: 0;
    background: #fed85d;
    border-left: 1px solid #aaa;
    border-right: 1px solid #c8c8b8;
    border-bottom: 1px solid #c9c2a5;
}

.grid .n {
    padding: 0 1px 0 0;
    text-align: right;
}

.grid .d {
    padding: 0;
    background: #a3cdf0;
    border-left: 3px solid #f4a7ab;
    border-right: 3px solid #f4a7ab;
    border-bottom: 1px solid #bdd8f0;
    text-align: right;
}

.grid tbody tr:nth-child(even) .d {
    background: #9cc3e6;
}

.grid .e,
.grid tbody tr:nth-child(even) .e {
    background: #fff;
    border-right: 1px solid #f0f0f0;
    border-bottom: 1px solid #f0f0f0;
}

/* 垂直滚动条 */
.vscroll {
    width: 21px;
    padding: 2px 2px 2px 1px;
    background: #cdcdcd;
    display: flex;
    flex-direction: column;
}

.vs-btn {
    height: 19px;
    background: #fff;
    border: 1px solid #777;
    display: flex;
    align-items: center;
    justify-content: center;
}

.vs-thumb {
    height: 64px;
    margin-top: 1px;
    background: #fff;
    border: 1px solid #777;
}

.vs-down {
    margin-top: auto;
}

/* 记录导航 */
.recbar {
    height: 21px;
    background: #f2f3f5;
    border-top: 1px solid #a9a9a9;
    display: flex;
    align-items: center;
    overflow: hidden;
}

.rec-label {
    margin-left: 6px;
    color: #666;
}

.rec-first {
    margin-left: 6px;
}

.rec-prev {
    margin-left: 13px;
}

.rec-input {
    width: 113px;
    height: 20px;
    margin: 1px 0 0 7px;
    background: #fff;
    color: #111;
    padding-left: 2px;
    line-height: 21px;
    white-space: nowrap;
    overflow: hidden;
}

.rec-next {
    margin-left: 10px;
}

.rec-last {
    margin-left: 15px;
}

.rec-new {
    margin-left: 8px;
}

.rec-filter {
    width: 86px;
    height: 20px;
    margin: 1px 0 0 9px;
    background: #ffc0c4;
    color: #333;
    padding-left: 10px;
    display: flex;
    align-items: center;
    gap: 5px;
}

.rec-search {
    width: 88px;
    height: 20px;
    margin: 1px 0 0 7px;
    background: #fff;
    color: #111;
    padding-left: 2px;
    line-height: 22px;
    border: 1px solid #d4d4d4;
    border-bottom: 0;
}

.hscroll {
    flex: 1;
    height: 100%;
    background: linear-gradient(#f2f3f5 55%, #e4e5e9 55%);
}

.rec-corner {
    width: 21px;
    height: 100%;
    background: #c3c3c6;
}

/* 状态栏 */
.statusbar {
    height: 27px;
    border-top: 1px solid #cfcfcf;
    background: #f1f1f1;
    display: flex;
    align-items: center;
    color: #555;
}

.st-left {
    margin-left: 10px;
}

.st-num {
    margin-left: 984px;
}

.st-filt {
    margin-left: 24px;
}

.st-btn {
    width: 50px;
    height: 100%;
    display: flex;
    align-items: center;
    justify-content: center;
}

.st-on {
    margin-left: 24px;
    background: #c6c6c6;
}

/* 红框标注 */
.callout {
    position: absolute;
    left: 278px;
    top: 831px;
    width: 223px;
    height: 60px;
    border: 3px solid #f33a3a;
}
```
